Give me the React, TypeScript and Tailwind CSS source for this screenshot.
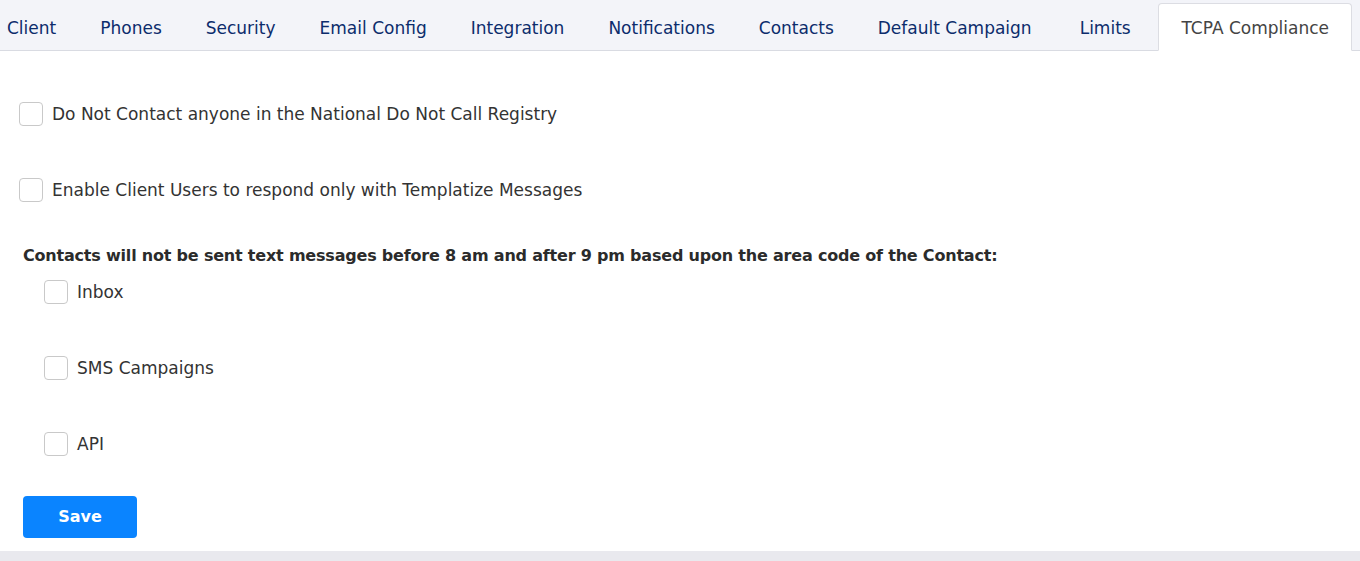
const tabs = [
  'Client',
  'Phones',
  'Security',
  'Email Config',
  'Integration',
  'Notifications',
  'Contacts',
  'Default Campaign',
  'Limits',
];

function Check({ label }: { label: string }) {
  return (
    <label className="flex items-center h-6 gap-[9px] cursor-pointer">
      <span className="block w-6 h-6 rounded-[4px] border border-[#c9c9c9] bg-white" />
      <span className="text-[17px] text-[#333] pt-[2px]">{label}</span>
    </label>
  );
}

export default function App() {
  return (
    <div className="w-[1360px] h-[561px] bg-[#e9e9ee] font-['DejaVu_Sans',sans-serif]">
      <div className="bg-white h-[551px]">
        <div className="flex items-end h-[51px] bg-[#f3f4f9] border-b border-[#d9dbe2]">
          {tabs.map((t, i) => (
            <div
              key={t}
              className={`h-[48px] pt-[5px] flex items-center text-[17px] text-[#0c2c6c] ${i === 0 ? 'pl-[7px] pr-[22px]' : i === 7 ? 'pl-[22px] pr-[26px]' : 'px-[22px]'}`}
            >
              {t}
            </div>
          ))}
          <div className="h-[48px] pt-[4px] ml-auto mr-[8px] mb-[-1px] px-[22px] flex items-center bg-white border border-[#dcdde3] border-b-white rounded-t-[4px] text-[17px] text-[#444]">
            TCPA Compliance
          </div>
        </div>

        <div className="pl-[19px] pt-[51px]">
          <Check label="Do Not Contact anyone in the National Do Not Call Registry" />
          <div className="mt-[52px]">
            <Check label="Enable Client Users to respond only with Templatize Messages" />
          </div>
          <p className="mt-[40px] ml-[4px] h-6 pt-[2px] leading-6 text-[16px] font-bold tracking-[-0.2px] text-[#2b2b2b]">
            Contacts will not be sent text messages before 8 am and after 9 pm based upon the area code of the Contact:
          </p>
          <div className="ml-[25px] mt-[14px] flex flex-col gap-[52px]">
            <Check label="Inbox" />
            <Check label="SMS Campaigns" />
            <Check label="API" />
          </div>
          <button className="mt-[40px] ml-[4px] w-[114px] h-[42px] rounded-[4px] bg-[#0a84ff] text-white text-[16px] font-semibold">
            Save
          </button>
        </div>
      </div>
    </div>
  );
}
